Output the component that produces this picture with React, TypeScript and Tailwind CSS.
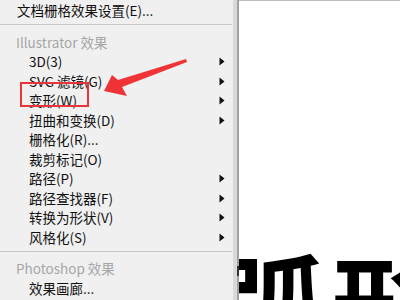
import { Fragment } from "react";

type Row =
  | { kind: "item"; label: string; sub?: boolean; top?: boolean }
  | { kind: "header"; label: string }
  | { kind: "sep" };

const rows: Row[] = [
  { kind: "item", label: "文档栅格效果设置(E)...", top: true },
  { kind: "sep" },
  { kind: "header", label: "Illustrator 效果" },
  { kind: "item", label: "3D(3)", sub: true },
  { kind: "item", label: "SVG 滤镜(G)", sub: true },
  { kind: "item", label: "变形(W)", sub: true },
  { kind: "item", label: "扭曲和变换(D)", sub: true },
  { kind: "item", label: "栅格化(R)..." },
  { kind: "item", label: "裁剪标记(O)" },
  { kind: "item", label: "路径(P)", sub: true },
  { kind: "item", label: "路径查找器(F)", sub: true },
  { kind: "item", label: "转换为形状(V)", sub: true },
  { kind: "item", label: "风格化(S)", sub: true },
  { kind: "sep" },
  { kind: "header", label: "Photoshop 效果" },
  { kind: "item", label: "效果画廊..." },
];

function SubArrow() {
  return (
    <svg width="6" height="9" viewBox="0 0 6 9" className="shrink-0">
      <path d="M0.5 0.5 L5.5 4.5 L0.5 8.5 Z" fill="#111" />
    </svg>
  );
}

export default function App() {
  return (
    <div
      className="relative w-[400px] h-[300px] overflow-hidden bg-white"
      style={{ fontFamily: '"Noto Sans CJK SC", "Noto Sans", sans-serif' }}
    >
      {/* document window behind the menu */}
      <div className="flex flex-col h-full">
        <div className="h-[17px] bg-[#2a2a2a] border-b border-[#bdbdbd]" />
        <div className="flex-1 bg-white pl-[220px] pt-[246px]">
          <div className="text-[104px] leading-none font-bold text-black tracking-[8px] whitespace-nowrap">
            弧形
          </div>
        </div>
      </div>

      {/* effect menu */}
      <div className="absolute left-0 top-0 h-full flex">
        <div className="w-[233px] h-full bg-[#f0f0f0] text-[13.5px] text-[#111] flex flex-col">
          {rows.map((r, i) => {
            if (r.kind === "sep") {
              return (
                <div key={i} className={i === 1 ? "h-[12.75px] pt-[4px]" : "h-[12px] pt-[4.5px]"}>
                  <div className="h-px bg-[#c6c6c6] mr-[1px]" />
                </div>
              );
            }
            if (r.kind === "header") {
              return (
                <div key={i} className="h-[19.5px] flex items-center pl-[16px] text-[#a6a6a6]">
                  {r.label}
                </div>
              );
            }
            return (
              <Fragment key={i}>
                <div
                  className={
                    "h-[19.5px] flex items-center justify-between pr-[8px] " +
                    (r.top ? "pl-[17px]" : "pl-[29px]")
                  }
                >
                  <span className="whitespace-nowrap">{r.label}</span>
                  {r.sub && <SubArrow />}
                </div>
              </Fragment>
            );
          })}
        </div>
        <div className="w-[4px] h-full bg-[#d9d9d9]" />
        <div className="w-[2px] h-full bg-[#a2a2a2] flex flex-col">
          <div className="h-[266px]" />
          <div className="h-[10px] w-[2px] bg-[#333]" />
        </div>
      </div>

      {/* annotation: red box */}
      <div className="absolute left-[20px] top-[82px] w-[69px] h-[25px] border-2 border-[#e8343a]" />

      {/* annotation: red arrow */}
      <svg className="absolute left-0 top-0" width="400" height="300" viewBox="0 0 400 300">
        <polygon
          points="104,91 112,75 118,80 186,59 187,62 122,87 127,96"
          fill="#ef3336"
        />
      </svg>
    </div>
  );
}
